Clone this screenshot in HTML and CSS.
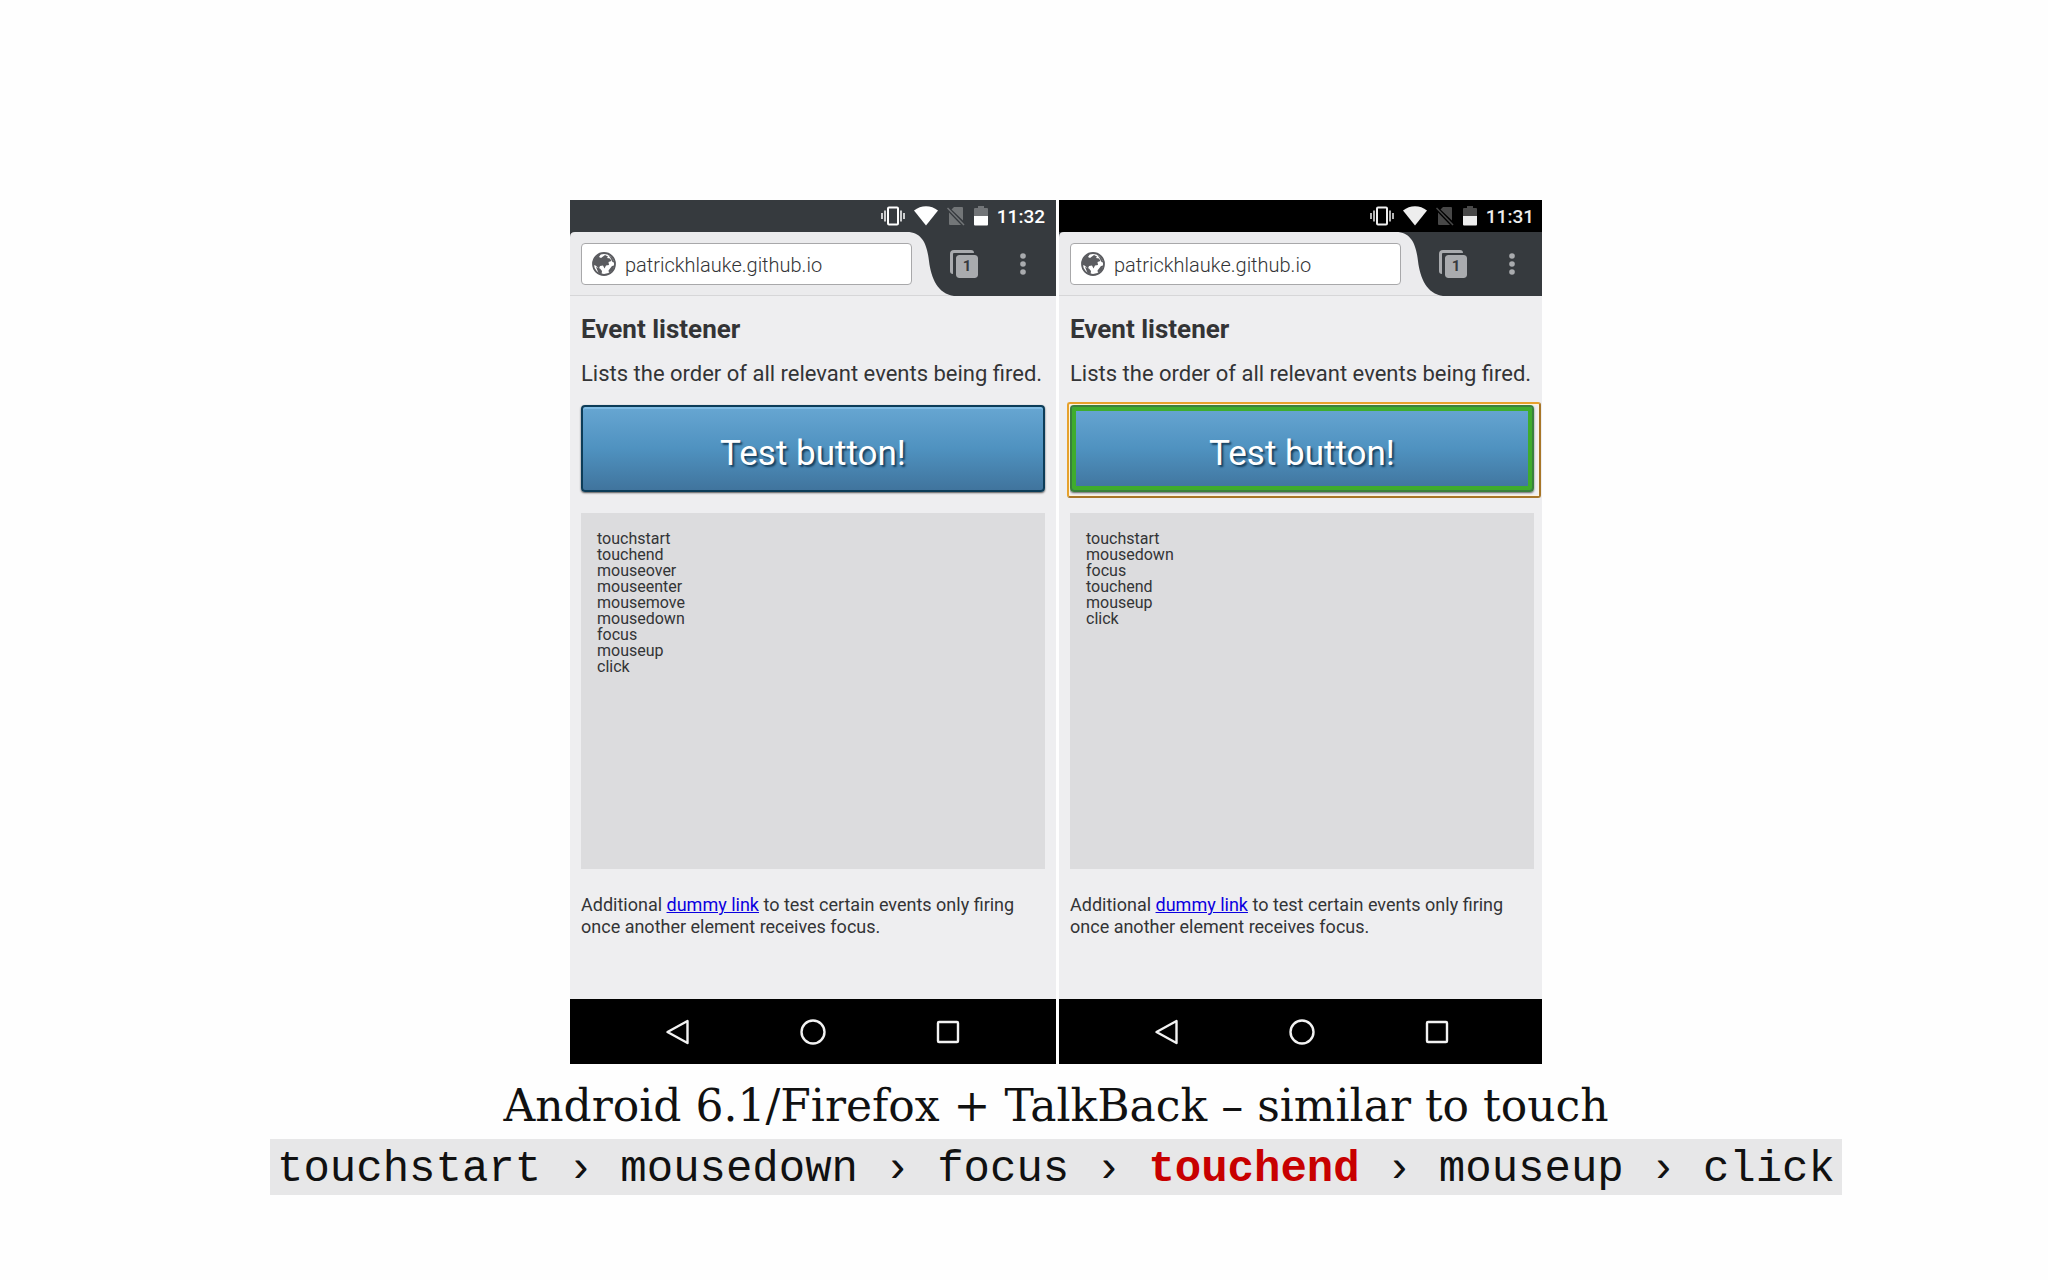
FILE: index.html
```
<!DOCTYPE html>
<html lang="en">
<head>
  <meta charset="UTF-8">
  <title>Android 6.1/Firefox + TalkBack</title>
  <link rel="stylesheet" href="styles.css">
</head>
<body>
  <!-- shared icons -->
  <svg class="defs" width="0" height="0" aria-hidden="true">
    <symbol id="vibrate" viewBox="0 0 24 20">
      <rect x="7" y="1.5" width="10" height="17" rx="1" fill="none" stroke="currentColor" stroke-width="2"/>
      <path d="M1 7v6M4 4.500v11M20 4.500v11M23 7v6" fill="none" stroke="currentColor" stroke-width="1.500"/>
    </symbol>
    <symbol id="wifi" viewBox="0 0 24 20">
      <path d="M12 19.500L0 4.500C7-1.200 17-1.200 24 4.500z" fill="currentColor"/>
    </symbol>
    <symbol id="nosim" viewBox="0 0 18 20">
      <path d="M7 1h8q1 0 1 1v12.500L4.500 3.500zM2 6.500L14 19H3q-1 0-1-1z" fill="currentColor"/>
      <path d="M0.500 2L17 19" stroke="currentColor" stroke-width="1.500"/>
    </symbol>
    <symbol id="battery" viewBox="0 0 14 20">
      <path d="M4 0h6v2h3q1 0 1 1v7H0V3q0-1 1-1h3z" fill="currentColor" opacity="0.3"/>
      <path d="M0 10h14v8.500q0 1-1 1H1q-1 0-1-1z" fill="currentColor"/>
    </symbol>
    <symbol id="globe" viewBox="0 0 24 24">
      <circle cx="12" cy="12" r="11" fill="#fff" stroke="#5b5c60" stroke-width="1.800"/>
      <path d="M1.500 9C3 5 6 2.500 9 2L7 5l2 1 4-3 3 1.500L15 6l3 .5 1.500 2.500-3 1 .5 3-3 .5-1.500 3-1.500-3-3 .5-1 2.500L3.500 13.500 1.500 13z" fill="#5b5c60"/>
      <path d="M4 15l4 1.500 2 2.500-.5 3.500-3-1.500zM16 2.500l4 3 2.500 5-2-.5-2-4zM20 14l2.500-.5-2 5-3.500 2.500-.5-2.500z" fill="#5b5c60"/>
    </symbol>
    <symbol id="menu" viewBox="0 0 6 24">
      <circle cx="3" cy="4" r="2.800" fill="#a9abae"/>
      <circle cx="3" cy="12" r="2.800" fill="#a9abae"/>
      <circle cx="3" cy="20" r="2.800" fill="#a9abae"/>
    </symbol>
    <symbol id="curve" viewBox="0 0 384 64">
      <path d="M0 64V5Q0 0 5 0H337C352 0 357 12 359 29C361 46 368 62 384 64z" fill="#ebebed"/>
      <path d="M0 63.500H380" stroke="#d6d6d8"/>
    </symbol>
    <symbol id="back" viewBox="0 0 26 26">
      <path d="M22.500 2v22L2.500 13z" fill="none" stroke="#f2f2f2" stroke-width="2.400" stroke-linejoin="round"/>
    </symbol>
    <symbol id="home" viewBox="0 0 26 26">
      <circle cx="13" cy="13" r="11.500" fill="none" stroke="#f2f2f2" stroke-width="2.400"/>
    </symbol>
    <symbol id="recent" viewBox="0 0 26 26">
      <rect x="3" y="3" width="20" height="20" rx="1" fill="none" stroke="#f2f2f2" stroke-width="2.400"/>
    </symbol>
  </svg>

  <main>
    <div class="phones">
      <section class="phone">
        <div class="status">
          <svg width="24" height="20"><use href="#vibrate"/></svg>
          <svg width="24" height="20"><use href="#wifi"/></svg>
          <svg class="dim" width="18" height="20"><use href="#nosim"/></svg>
          <svg width="14" height="20"><use href="#battery"/></svg>
          <time>11:32</time>
        </div>
        <div class="toolbar">
          <div class="tab">
            <svg class="tab-shape" width="384" height="64"><use href="#curve"/></svg>
            <label class="address">
              <svg width="24" height="24"><use href="#globe"/></svg>
              <input type="text" value="patrickhlauke.github.io" aria-label="Address">
            </label>
          </div>
          <button class="tabs" type="button" aria-label="Tabs"><span>1</span></button>
          <button class="menu" type="button" aria-label="Menu"><svg width="6" height="24"><use href="#menu"/></svg></button>
        </div>
        <div class="page">
          <h2>Event listener</h2>
          <p class="intro">Lists the order of all relevant events being fired.</p>
          <div class="target">
            <button class="test" type="button">Test button!</button>
          </div>
          <ol class="log">
            <li>touchstart</li>
            <li>touchend</li>
            <li>mouseover</li>
            <li>mouseenter</li>
            <li>mousemove</li>
            <li>mousedown</li>
            <li>focus</li>
            <li>mouseup</li>
            <li>click</li>
          </ol>
          <p class="note">Additional <a href="#">dummy link</a> to test certain events only firing once another element receives focus.</p>
        </div>
        <nav>
          <button type="button" aria-label="Back"><svg width="26" height="26"><use href="#back"/></svg></button>
          <button type="button" aria-label="Home"><svg width="26" height="26"><use href="#home"/></svg></button>
          <button type="button" aria-label="Recent apps"><svg width="26" height="26"><use href="#recent"/></svg></button>
        </nav>
      </section>

      <section class="phone talkback">
        <div class="status">
          <svg width="24" height="20"><use href="#vibrate"/></svg>
          <svg width="24" height="20"><use href="#wifi"/></svg>
          <svg class="dim" width="18" height="20"><use href="#nosim"/></svg>
          <svg width="14" height="20"><use href="#battery"/></svg>
          <time>11:31</time>
        </div>
        <div class="toolbar">
          <div class="tab">
            <svg class="tab-shape" width="384" height="64"><use href="#curve"/></svg>
            <label class="address">
              <svg width="24" height="24"><use href="#globe"/></svg>
              <input type="text" value="patrickhlauke.github.io" aria-label="Address">
            </label>
          </div>
          <button class="tabs" type="button" aria-label="Tabs"><span>1</span></button>
          <button class="menu" type="button" aria-label="Menu"><svg width="6" height="24"><use href="#menu"/></svg></button>
        </div>
        <div class="page">
          <h2>Event listener</h2>
          <p class="intro">Lists the order of all relevant events being fired.</p>
          <div class="target">
            <button class="test" type="button">Test button!</button>
          </div>
          <ol class="log">
            <li>touchstart</li>
            <li>mousedown</li>
            <li>focus</li>
            <li>touchend</li>
            <li>mouseup</li>
            <li>click</li>
          </ol>
          <p class="note">Additional <a href="#">dummy link</a> to test certain events only firing once another element receives focus.</p>
        </div>
        <nav>
          <button type="button" aria-label="Back"><svg width="26" height="26"><use href="#back"/></svg></button>
          <button type="button" aria-label="Home"><svg width="26" height="26"><use href="#home"/></svg></button>
          <button type="button" aria-label="Recent apps"><svg width="26" height="26"><use href="#recent"/></svg></button>
        </nav>
      </section>
    </div>

    <h1>Android 6.1/Firefox + TalkBack – similar to touch</h1>
    <code class="sequence">touchstart › mousedown › focus › <strong>touchend</strong> › mouseup › click</code>
  </main>
</body>
</html>
```
FILE: styles.css
```
* {
  box-sizing: border-box;
}
body {
  margin: 0;
  padding: 200px 0 0 64px;
  background: #fefefe;
  color: #111;
  font-family: Roboto, sans-serif;
}
.defs {
  position: absolute;
}
svg {
  display: block;
  flex: none;
}
button {
  padding: 0;
  border: none;
  background: none;
  font-family: inherit;
  cursor: pointer;
}
main {
  display: flex;
  flex-direction: column;
  align-items: center;
}

/* phones */
.phones {
  display: grid;
  grid-template-columns: 486fr 483fr;
  gap: 3px;
  width: 100%;
  max-width: 972px;
}
.phone {
  --edge: 11px;
  background: #eeeef0;
  color: #333436;
}
.phone.talkback {
  --edge: 8px;
}
.status {
  display: flex;
  align-items: center;
  justify-content: flex-end;
  gap: 9px;
  height: 32px;
  padding-right: var(--edge);
  background: #363a3e;
  color: #fff;
}
.talkback .status {
  background: #000;
  color: #eee;
}
.status .dim {
  opacity: 0.3;
}
.status time {
  font-size: 19px;
  font-weight: 500;
}
.toolbar {
  display: flex;
  align-items: center;
  height: 64px;
  background: #363a3e;
}
.tab {
  position: relative;
  display: flex;
  width: 380px;
  height: 64px;
  padding: 11px 38px 11px 11px;
}
.tab-shape {
  position: absolute;
  top: 0;
  left: 0;
}
.address {
  position: relative;
  display: flex;
  align-items: center;
  gap: 9px;
  flex: 1;
  padding-left: 10px;
  border: 1px solid #a8a8aa;
  border-radius: 4px;
  background: #fff;
}
.address input {
  flex: 1;
  min-width: 0;
  padding: 1px 0 0;
  border: none;
  outline: none;
  background: none;
  color: #333436;
  font: 300 20px Roboto, sans-serif;
}
.tabs {
  position: relative;
  display: flex;
  width: 28px;
  height: 28px;
  padding: 5px 0 0 6px;
}
.tabs::before {
  content: "";
  position: absolute;
  top: 0;
  left: 0;
  width: 21px;
  height: 21px;
  border: solid #a9abae;
  border-width: 3px 0 0 3px;
  border-radius: 4px 3px 0 3px;
}
.tabs span {
  position: relative;
  flex: 1;
  border-radius: 3px;
  outline: 2px solid #363a3e;
  background: #a9abae;
  color: #363a3e;
  font-size: 15px;
  font-weight: 700;
  line-height: 23px;
}
.menu {
  margin-left: 42px;
}

.page {
  padding: 19px var(--edge) 61px 11px;
}
h2 {
  margin: 0;
  font-size: 26px;
  line-height: 28px;
}
.intro {
  margin: 18px 0;
  font-size: 22px;
  line-height: 26px;
  white-space: nowrap;
}
.target {
  position: relative;
}
.test {
  display: block;
  width: 100%;
  height: 87px;
  padding-top: 10px;
  border: 2px solid #0c3c58;
  border-radius: 4px;
  background: linear-gradient(#67a6d2, #4f92c0 50%, #40749d);
  box-shadow: inset 0 2px 0 #7fbbe3, 0 1px 2px #555;
  color: #fff;
  font-size: 35px;
  text-shadow: 2px 2px 2px #153e5c;
}
.talkback .test {
  border-color: #39803c;
  box-shadow: inset 0 0 0 4px #3fac2d, 0 1px 2px #666;
}
.talkback .target::after {
  content: "";
  position: absolute;
  inset: -3px -7px -6px -3px;
  border: 2px solid #e6a12c;
  border-right-color: #a87628;
  border-bottom-color: #a87628;
  border-radius: 3px;
  box-shadow: inset 0 0 0 1px #fff3dc;
}
.log {
  min-height: 356px;
  margin: 21px 0 0;
  padding: 18px 16px;
  background: #dcdcde;
  list-style: none;
  font-size: 16px;
  line-height: 16px;
}
.note {
  margin: 25px 0 0;
  max-width: 440px;
  font-size: 18px;
  line-height: 22px;
}
.note a {
  color: #0a00e0;
}
nav {
  display: flex;
  align-items: center;
  gap: 109px;
  height: 65px;
  padding-left: 95px;
  background: #000;
}

/* caption */
h1 {
  margin: 0;
  padding-top: 9px;
  font-family: "DejaVu Serif", serif;
  font-size: 44px;
  font-weight: 400;
  line-height: 66px;
}
.sequence {
  padding: 4px 7px 0;
  background: #e7e7e8;
  font-family: "Liberation Mono", monospace;
  font-size: 44px;
  line-height: 52px;
}
.sequence strong {
  color: #c80000;
}
```
